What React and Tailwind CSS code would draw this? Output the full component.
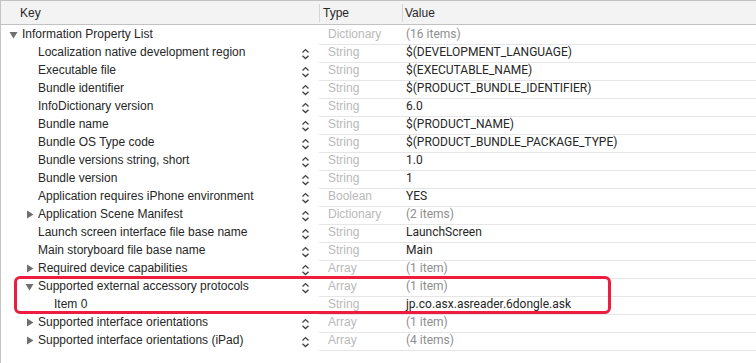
import React from "react";

const rows = [
  { level: 0, key: "Information Property List", disc: "down", type: "Dictionary", value: "(16 items)", gray: true, stepper: false },
  { level: 1, key: "Localization native development region", type: "String", value: "$(DEVELOPMENT_LANGUAGE)", stepper: true },
  { level: 1, key: "Executable file", type: "String", value: "$(EXECUTABLE_NAME)", stepper: true },
  { level: 1, key: "Bundle identifier", type: "String", value: "$(PRODUCT_BUNDLE_IDENTIFIER)", stepper: true },
  { level: 1, key: "InfoDictionary version", type: "String", value: "6.0", stepper: true },
  { level: 1, key: "Bundle name", type: "String", value: "$(PRODUCT_NAME)", stepper: true },
  { level: 1, key: "Bundle OS Type code", type: "String", value: "$(PRODUCT_BUNDLE_PACKAGE_TYPE)", stepper: true },
  { level: 1, key: "Bundle versions string, short", type: "String", value: "1.0", stepper: true },
  { level: 1, key: "Bundle version", type: "String", value: "1", stepper: true },
  { level: 1, key: "Application requires iPhone environment", type: "Boolean", value: "YES", stepper: true },
  { level: 1, key: "Application Scene Manifest", disc: "right", type: "Dictionary", value: "(2 items)", gray: true, stepper: true },
  { level: 1, key: "Launch screen interface file base name", type: "String", value: "LaunchScreen", stepper: true },
  { level: 1, key: "Main storyboard file base name", type: "String", value: "Main", stepper: true },
  { level: 1, key: "Required device capabilities", disc: "right", type: "Array", value: "(1 item)", gray: true, stepper: true },
  { level: 1, key: "Supported external accessory protocols", disc: "down", type: "Array", value: "(1 item)", gray: true, stepper: true },
  { level: 2, key: "Item 0", type: "String", value: "jp.co.asx.asreader.6dongle.ask", stepper: false },
  { level: 1, key: "Supported interface orientations", disc: "right", type: "Array", value: "(1 item)", gray: true, stepper: true },
  { level: 1, key: "Supported interface orientations (iPad)", disc: "right", type: "Array", value: "(4 items)", gray: true, stepper: true },
];

function Disclosure({ dir }) {
  if (dir === "down") {
    return (
      <svg width="9" height="8" viewBox="0 0 9 8">
        <path d="M0.5 1 L8.5 1 L4.5 7.5 Z" fill="#6e6e6e" />
      </svg>
    );
  }
  return (
    <svg width="8" height="9" viewBox="0 0 8 9">
      <path d="M1 0.5 L7.5 4.5 L1 8.5 Z" fill="#6e6e6e" />
    </svg>
  );
}

function Stepper() {
  return (
    <svg width="9" height="12" viewBox="0 0 9 12" className="mt-[3px]">
      <path d="M1.5 4.4 L4.5 1.6 L7.5 4.4" fill="none" stroke="#444" strokeWidth="1.4" />
      <path d="M1.5 7.8 L4.5 10.6 L7.5 7.8" fill="none" stroke="#444" strokeWidth="1.4" />
    </svg>
  );
}

function Row({ r }) {
  const padLeft = ["pl-[5px]", "pl-[21px]", "pl-[37px]"][r.level];
  return (
    <div className="grid grid-cols-[318px_83px_1fr] h-[18px]">
      <div className={`flex items-center ${padLeft} pr-[9px] pb-[2px]`}>
        <div className="w-[16px] flex items-center justify-end pr-[4px] pt-[1px]">
          {r.disc ? <Disclosure dir={r.disc} /> : null}
        </div>
        <span className="text-[12px] text-[#262626] whitespace-nowrap">{r.key}</span>
        <div className="ml-auto flex items-center">{r.stepper ? <Stepper /> : null}</div>
      </div>
      <div className="flex items-center pl-[9px] pb-[1px] border-b border-[#e6e6e6]">
        <span className="text-[12px] text-[#b9b9b9] whitespace-nowrap">{r.type}</span>
      </div>
      <div className="flex items-center pl-[4px] pb-[1px] border-b border-[#e6e6e6]">
        <span
          className={`text-[12px] whitespace-nowrap ${r.gray ? "text-[#8e8e8e]" : "text-[#262626]"}`}
          style={{ fontFamily: "Roboto, 'Liberation Sans', sans-serif" }}
        >
          {r.value}
        </span>
      </div>
    </div>
  );
}

export default function App() {
  return (
    <div
      className="relative w-[756px] h-[363px] bg-white overflow-hidden border-l border-[#c4c4c4]"
      style={{ fontFamily: '"Liberation Sans", Arial, sans-serif' }}
    >
      <div className="grid grid-cols-[318px_83px_1fr] h-[25px] bg-[#f3f3f3] border-t border-b border-[#c2c2c2]">
        <div className="flex items-center pl-[19px] text-[12px] text-[#262626]">Key</div>
        <div className="flex items-center pl-[3px] text-[12px] text-[#262626] border-l border-[#d6d6d6] my-[3px]">Type</div>
        <div className="flex items-center pl-[2px] text-[12px] text-[#262626] border-l border-[#d6d6d6] my-[3px]">Value</div>
      </div>
      <div className="flex flex-col">
        {rows.map((r, i) => (
          <Row key={i} r={r} />
        ))}
      </div>
      <div className="absolute left-[13px] top-[276px] w-[597px] h-[38px] border-[3px] border-[#ee1c3f] rounded-[6px] pointer-events-none" />
    </div>
  );
}
